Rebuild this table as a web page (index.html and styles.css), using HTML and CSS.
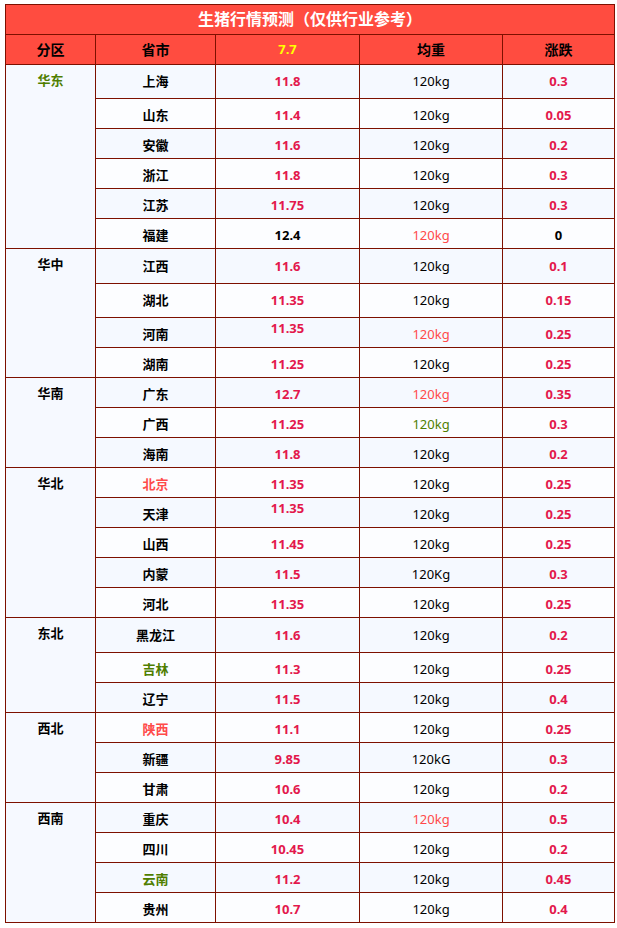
FILE: index.html
```html
<!DOCTYPE html>
<html lang="zh">
<head>
<meta charset="utf-8">
<title>生猪行情预测</title>
<link rel="stylesheet" href="styles.css">
</head>
<body>
<div class="page">
<table class="grid">
<colgroup>
<col class="c-region"><col class="c-prov"><col class="c-price"><col class="c-weight"><col class="c-change">
</colgroup>
<thead>
<tr class="title-row"><th colspan="5">生猪行情预测（仅供行业参考）</th></tr>
<tr class="head-row"><th>分区</th><th>省市</th><th class="yellow">7.7</th><th>均重</th><th>涨跌</th></tr>
</thead>
<tbody>
<tr class="b h34"><td class="region" rowspan="6"><span class="green">华东</span></td><td class="prov">上海</td><td class="num">11.8</td><td class="w">120kg</td><td class="num">0.3</td></tr>
<tr class="a"><td class="prov">山东</td><td class="num">11.4</td><td class="w">120kg</td><td class="num">0.05</td></tr>
<tr class="b"><td class="prov">安徽</td><td class="num">11.6</td><td class="w">120kg</td><td class="num">0.2</td></tr>
<tr class="a"><td class="prov">浙江</td><td class="num">11.8</td><td class="w">120kg</td><td class="num">0.3</td></tr>
<tr class="b"><td class="prov">江苏</td><td class="num">11.75</td><td class="w">120kg</td><td class="num">0.3</td></tr>
<tr class="a"><td class="prov">福建</td><td class="num black">12.4</td><td class="w red">120kg</td><td class="num black">0</td></tr>

<tr class="b h35"><td class="region" rowspan="4">华中</td><td class="prov">江西</td><td class="num">11.6</td><td class="w">120kg</td><td class="num">0.1</td></tr>
<tr class="a h34"><td class="prov">湖北</td><td class="num">11.35</td><td class="w">120kg</td><td class="num">0.15</td></tr>
<tr class="b"><td class="prov">河南</td><td class="num up">11.35</td><td class="w red">120kg</td><td class="num">0.25</td></tr>
<tr class="a"><td class="prov">湖南</td><td class="num">11.25</td><td class="w">120kg</td><td class="num">0.25</td></tr>

<tr class="b"><td class="region" rowspan="3">华南</td><td class="prov">广东</td><td class="num">12.7</td><td class="w red">120kg</td><td class="num">0.35</td></tr>
<tr class="a"><td class="prov">广西</td><td class="num">11.25</td><td class="w green">120kg</td><td class="num">0.3</td></tr>
<tr class="b"><td class="prov">海南</td><td class="num">11.8</td><td class="w">120kg</td><td class="num">0.2</td></tr>

<tr class="a"><td class="region" rowspan="5">华北</td><td class="prov red">北京</td><td class="num">11.35</td><td class="w">120kg</td><td class="num">0.25</td></tr>
<tr class="b"><td class="prov">天津</td><td class="num up">11.35</td><td class="w">120kg</td><td class="num">0.25</td></tr>
<tr class="a"><td class="prov">山西</td><td class="num">11.45</td><td class="w">120kg</td><td class="num">0.25</td></tr>
<tr class="b"><td class="prov">内蒙</td><td class="num">11.5</td><td class="w">120Kg</td><td class="num">0.3</td></tr>
<tr class="a"><td class="prov">河北</td><td class="num">11.35</td><td class="w">120kg</td><td class="num">0.25</td></tr>

<tr class="b h35"><td class="region" rowspan="3">东北</td><td class="prov">黑龙江</td><td class="num">11.6</td><td class="w">120kg</td><td class="num">0.2</td></tr>
<tr class="a"><td class="prov green">吉林</td><td class="num">11.3</td><td class="w">120kg</td><td class="num">0.25</td></tr>
<tr class="b"><td class="prov">辽宁</td><td class="num">11.5</td><td class="w">120kg</td><td class="num">0.4</td></tr>

<tr class="a"><td class="region" rowspan="3">西北</td><td class="prov red">陕西</td><td class="num">11.1</td><td class="w">120kg</td><td class="num">0.25</td></tr>
<tr class="b"><td class="prov">新疆</td><td class="num">9.85</td><td class="w">120kG</td><td class="num">0.3</td></tr>
<tr class="a"><td class="prov">甘肃</td><td class="num">10.6</td><td class="w">120kg</td><td class="num">0.2</td></tr>

<tr class="b"><td class="region" rowspan="4">西南</td><td class="prov">重庆</td><td class="num">10.4</td><td class="w red">120kg</td><td class="num">0.5</td></tr>
<tr class="a"><td class="prov">四川</td><td class="num">10.45</td><td class="w">120kg</td><td class="num">0.2</td></tr>
<tr class="b"><td class="prov green">云南</td><td class="num">11.2</td><td class="w">120kg</td><td class="num">0.45</td></tr>
<tr class="a"><td class="prov">贵州</td><td class="num">10.7</td><td class="w">120kg</td><td class="num">0.4</td></tr>
</tbody>
</table>
</div>
</body>
</html>
```

FILE: styles.css
```css
html, body {
  margin: 0;
  padding: 0;
  background: #ffffff;
}

.page {
  padding: 4px 0 0 5px;
}

.grid {
  border-collapse: collapse;
  table-layout: fixed;
  width: 609px;
  font-family: "Noto Sans", "Noto Sans CJK SC", sans-serif;
  font-size: 13px;
  color: #000;
}

.c-region { width: 90px; }
.c-prov { width: 120px; }
.c-price { width: 144px; }
.c-weight { width: 143px; }
.c-change { width: 112px; }

.grid th,
.grid td {
  border: 1px solid #7d1000;
  padding: 0;
  text-align: center;
  vertical-align: middle;
  line-height: 17px;
}

.grid tbody td { padding-top: 4px; }
.grid tr.h34 td,
.grid tr.h35 td { padding-top: 0; }

.grid tr { height: 30px; }
.grid tr.h34 { height: 34px; }
.grid tr.h35 { height: 35px; }

.title-row th {
  background: #ff4c40;
  color: #ffffff;
  font-size: 16px;
  font-weight: 700;
}

.head-row th {
  background: #ff4c40;
  color: #000;
  font-size: 14px;
  font-weight: 700;
}

.head-row th.yellow { color: #ffff00; font-size: 13px; }

tr.a td { background: #fcfdff; }
tr.b td { background: #f5f9ff; }
.grid tbody td.region {
  background: #f6f9ff;
  vertical-align: top;
  padding-top: 7px;
  font-weight: 700;
}

.prov { font-weight: 700; }
.num { font-weight: 700; color: #e3184c; }
.w { font-weight: 400; }

.grid tbody td.up { vertical-align: top; padding-top: 2px; }

.grid .black { color: #000; }
.grid .red { color: #ff4a4a; }
.grid .green { color: #4f7e00; }
```
